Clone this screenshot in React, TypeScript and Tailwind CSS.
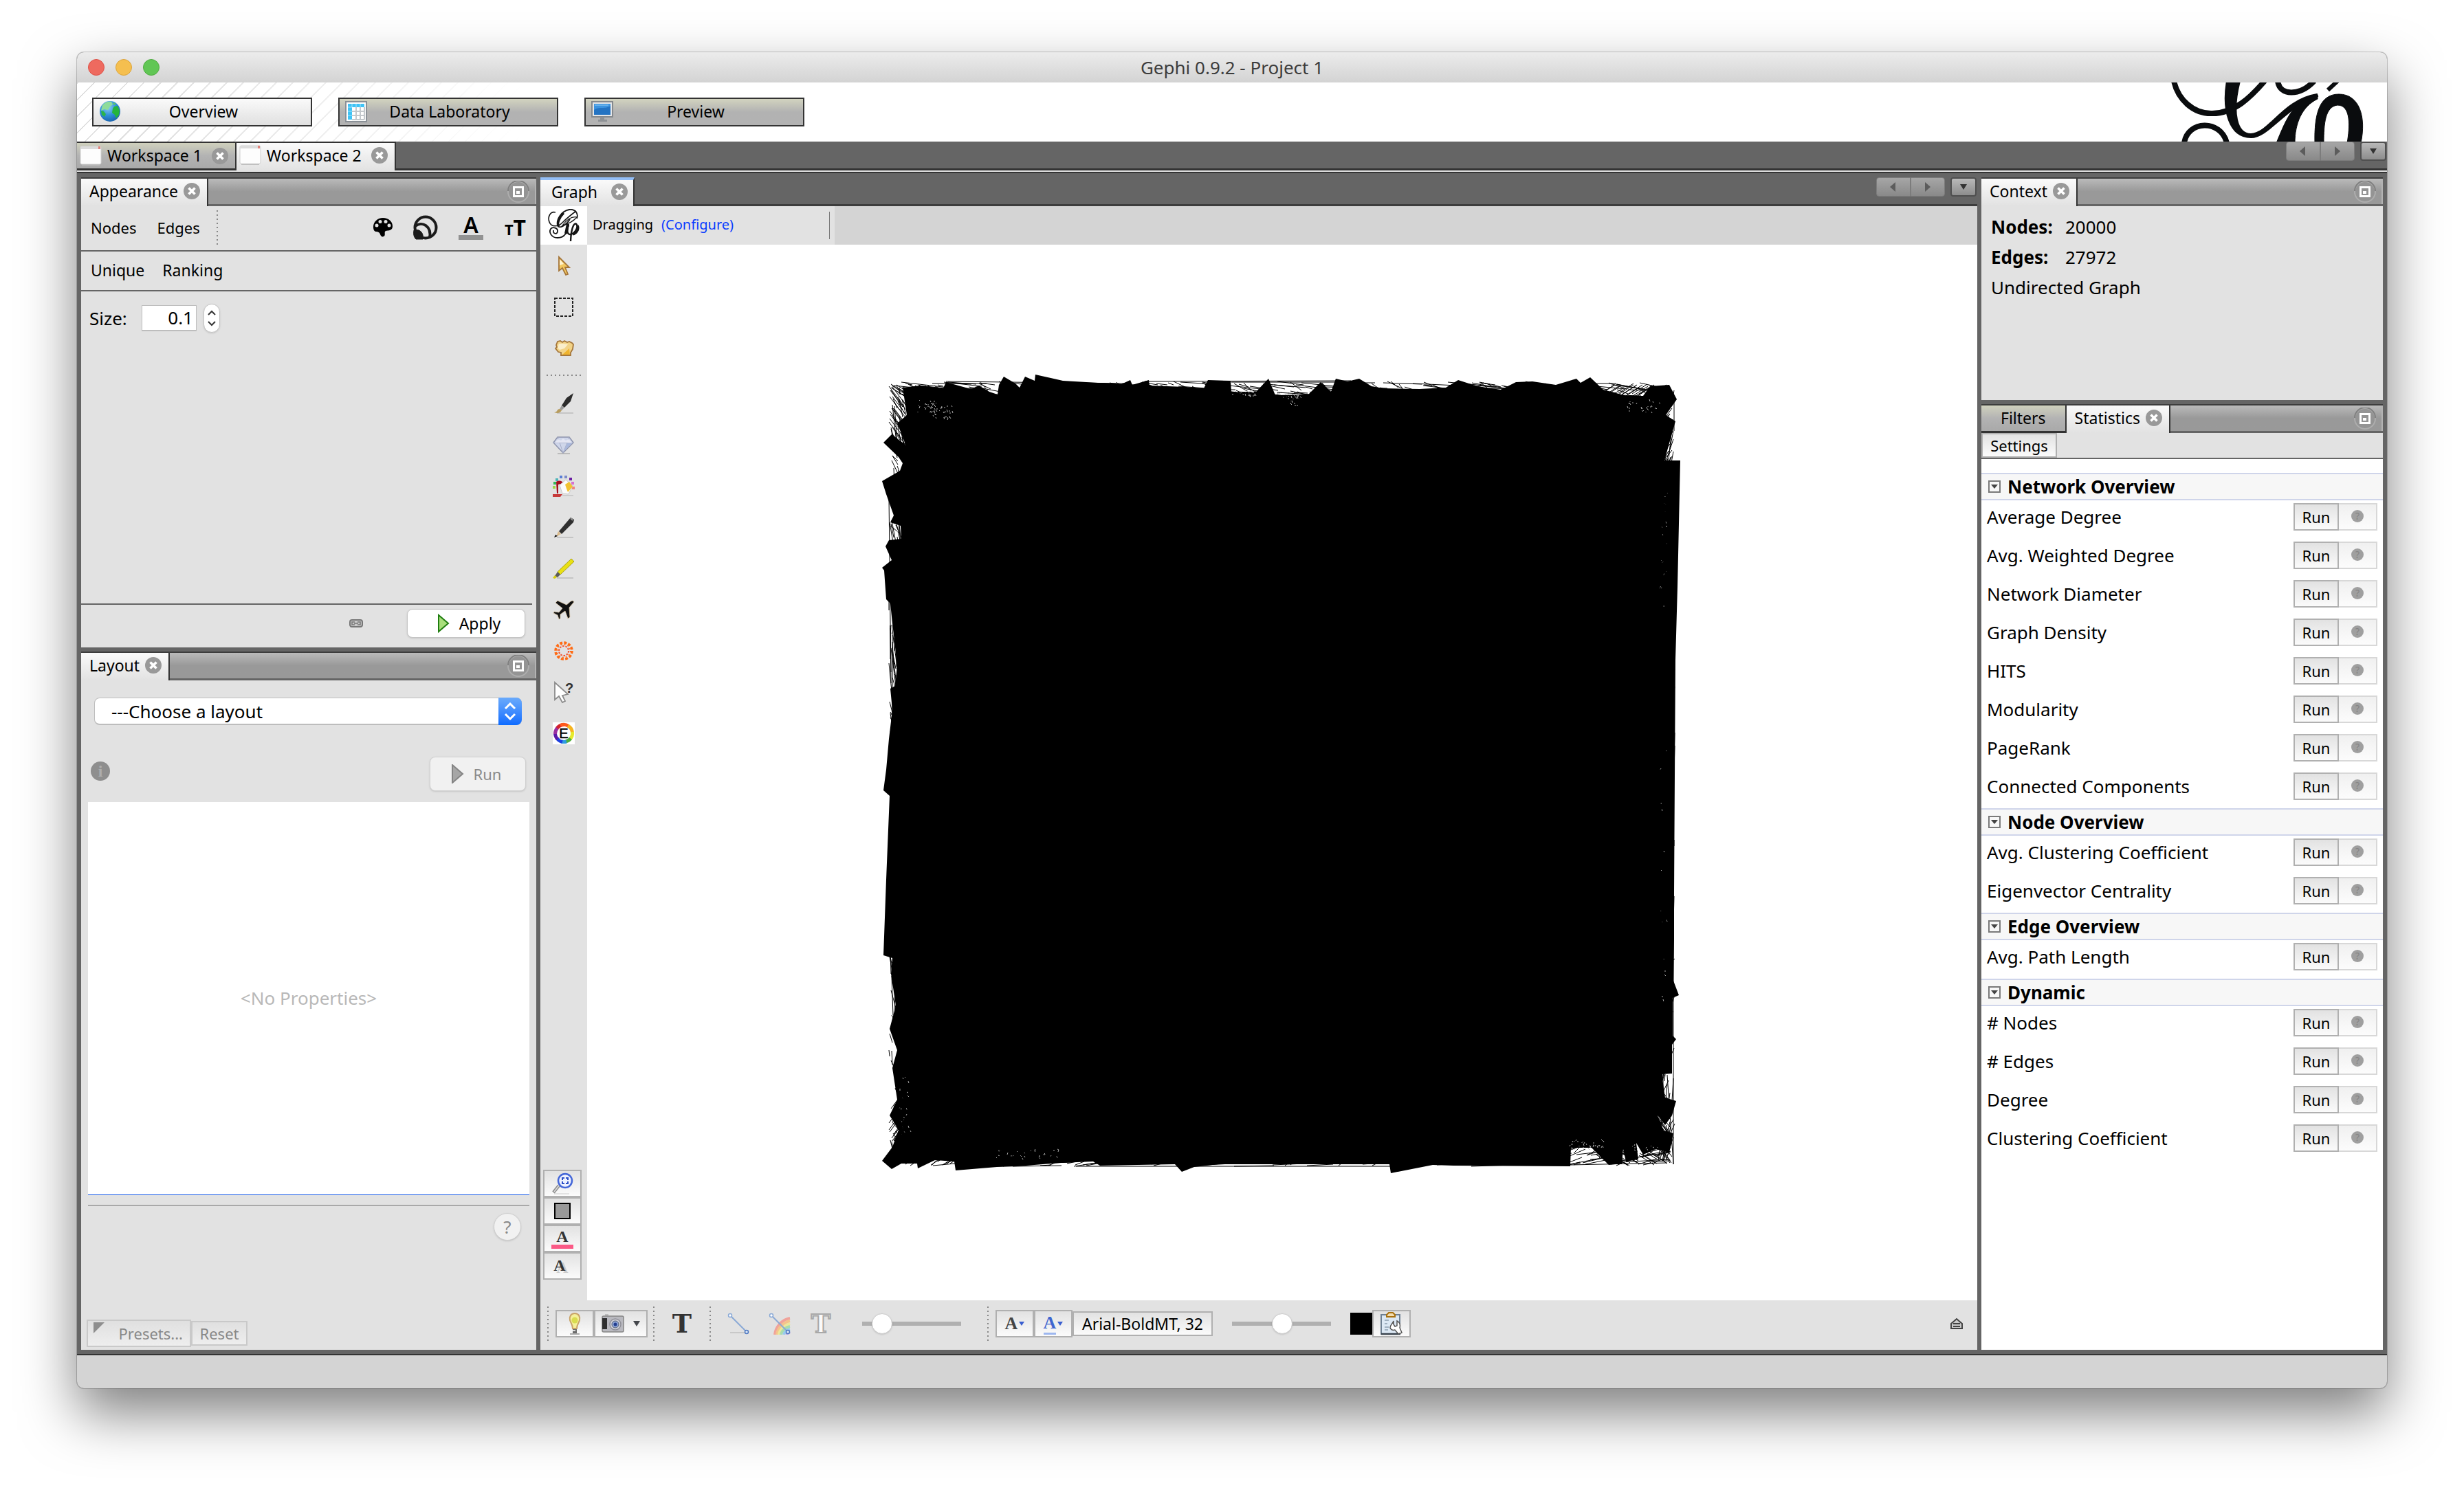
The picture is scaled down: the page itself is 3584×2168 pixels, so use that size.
import type { ReactNode } from 'react';

const perspectives = [
  { title: 'Overview', active: true, icon: <GlobeIcon /> },
  { title: 'Data Laboratory', active: false, icon: <TableIcon /> },
  { title: 'Preview', active: false, icon: <MonitorIcon /> },
];

const statistics = [
  {
    title: 'Network Overview',
    items: [
      'Average Degree',
      'Avg. Weighted Degree',
      'Network Diameter',
      'Graph Density',
      'HITS',
      'Modularity',
      'PageRank',
      'Connected Components',
    ],
  },
  { title: 'Node Overview', items: ['Avg. Clustering Coefficient', 'Eigenvector Centrality'] },
  { title: 'Edge Overview', items: ['Avg. Path Length'] },
  { title: 'Dynamic', items: ['# Nodes', '# Edges', 'Degree', 'Clustering Coefficient'] },
];

/* ---------- icons ---------- */

function GlobeIcon() {
  return (
    <svg viewBox="0 0 32 32" className="size-8">
      <defs>
        <radialGradient id="globe" cx="0.4" cy="0.3" r="0.8">
          <stop offset="0" stopColor="#8fd0f5" />
          <stop offset="0.5" stopColor="#2f8fd8" />
          <stop offset="1" stopColor="#1659a4" />
        </radialGradient>
      </defs>
      <circle cx="16" cy="16" r="15" fill="url(#globe)" />
      <path d="M5 7c4-5 9-6 13-5l2 4-4 3-3 5-5-1-5 2z" fill="#8fdc9a" />
      <path d="M22 9l5-1 3 7-1 6-4 5-2-5-4-3 1-6z" fill="#25b53c" />
      <path d="M3 15l4 1 3 4-2 4-4-3z" fill="#2bb54a" />
      <path d="M20 3l5 2-3 2z" fill="#5cca63" />
    </svg>
  );
}

function TableIcon() {
  return (
    <svg viewBox="0 0 32 32" className="size-8">
      <rect x="1" y="2" width="30" height="29" fill="#fff" stroke="#8a9096" strokeWidth="2" />
      <path d="M4 5h24v5H10v18H4z" fill="#3fc3f5" />
      <path d="M10 5v5M16 5v5M22 5v5M4 10h6M4 16h6M4 22h6" stroke="#a9e4fb" />
      <path d="M10 16h18M10 22h18M10 28h18M16 10v18M22 10v18M28 10v18" stroke="#c3c8cc" strokeWidth="2" />
    </svg>
  );
}

function MonitorIcon() {
  return (
    <svg viewBox="0 0 32 32" className="size-8">
      <rect x="1" y="2" width="30" height="22" fill="#e4e6e8" stroke="#85898d" strokeWidth="2" />
      <rect x="4" y="5" width="24" height="16" fill="#3b93df" />
      <path d="M4 14c8-6 14 0 24-6v13H4z" fill="#2373c2" />
      <path d="M5 6h20v2H5z" fill="#66b0ea" />
      <path d="M13 24h6v4h4v3H10v-3h3z" fill="#8d9195" />
    </svg>
  );
}

function HeaderLogo() {
  return (
    <svg viewBox="3140 120 332 86" className="h-[86px] w-[332px]" fill="none" stroke="#0a0c0e">
      <path d="M3162 118C3168 145 3190 165 3216 165C3250 166 3275 140 3294 118" strokeWidth="8" />
      <path d="M3239 118C3232 160 3242 200 3274 200C3300 200 3325 155 3371 140L3370 137C3320 145 3300 195 3274 195C3254 195 3246 165 3258 118Z" fill="#0a0c0e" strokeWidth="2" />
      <path d="M3371 138C3335 145 3325 175 3311 208H3338C3338 180 3348 155 3371 144Z" fill="#0a0c0e" strokeWidth="1" />
      <path d="M3313 118C3316 140 3345 140 3366 118" strokeWidth="8" />
      <path d="M3400 118L3386 131" strokeWidth="6" />
      <path d="M3367 208C3366 165 3374 137 3402 137C3432 137 3442 170 3434 208H3414C3418 185 3420 153 3400 153C3382 155 3380 180 3380 208Z" fill="#0a0c0e" strokeWidth="1" />
      <path d="M3177 208C3182 175 3230 173 3239 208" strokeWidth="8" />
    </svg>
  );
}

function SmallLogo() {
  return (
    <svg viewBox="0 0 48 48" className="size-12" fill="none" stroke="#151515">
      <path d="M12 5C5 3 0 11 3 19C6 27 16 26 22 20C30 12 38 6 42 3" strokeWidth="1.6" />
      <path d="M43 14C46 6 40 0 32 1C20 3 13 16 15 24C17 30 27 24 33 15" strokeWidth="1.8" />
      <path d="M24 6C17 13 14 22 17 26" strokeWidth="3" />
      <path d="M44 12C36 10 28 16 22 24C30 22 38 18 43 12" strokeWidth="1.2" />
      <path d="M31 22C29 34 26 42 15 42C6 42 2 34 5 29C8 25 16 28 15 33C14 38 8 36 9 31" strokeWidth="1.8" />
      <path d="M31 23C28 30 29 37 33 37C39 37 45 28 43 23C41 19 35 22 34 47" strokeWidth="2.4" />
      <path d="M30 22L27 36" strokeWidth="4" />
      <path d="M44 24C47 30 42 36 37 37" strokeWidth="3.2" />
    </svg>
  );
}

function CloseButton({ label }: { label: string }) {
  return (
    <button type="button" aria-label={label} className="shrink-0">
      <svg viewBox="0 0 24 24" className="size-6">
        <circle cx="12" cy="12" r="12" fill="#999" />
        <path d="M7.5 7.5l9 9M16.5 7.5l-9 9" stroke="#fff" strokeWidth="3.6" />
      </svg>
    </button>
  );
}

function MinimizeButton() {
  return (
    <button type="button" aria-label="Minimize Window Group">
      <svg viewBox="0 0 32 32" className="size-8">
        <circle cx="16" cy="16" r="15" fill="#949494" stroke="#adadad" strokeWidth="2" />
        <path d="M1 15a15 15 0 0 1 30 0" fill="none" stroke="#7f7f7f" strokeWidth="2" />
        <path d="M9.5 9.5h13v13h-13z" fill="none" stroke="#fff" strokeWidth="3" />
        <path d="M13 15h5v4h-5z" fill="#fff" />
      </svg>
    </button>
  );
}

function NavButtons() {
  return (
    <div className="flex gap-2 pr-px">
      <div className="flex">
        <button type="button" aria-label="Scroll left" className="flex h-7 w-[50px] items-center justify-center rounded-l-sm border border-[#7c7c7c] bg-linear-to-b from-[#a6a6a6] to-[#898989]">
          <svg viewBox="0 0 10 14" className="h-3.5 w-2.5" fill="#5c5c5c"><path d="M8 0v14L0 7z" /></svg>
        </button>
        <button type="button" aria-label="Scroll right" className="flex h-7 w-[50px] items-center justify-center rounded-r-sm border border-[#7c7c7c] bg-linear-to-b from-[#a6a6a6] to-[#898989]">
          <svg viewBox="0 0 10 14" className="h-3.5 w-2.5" fill="#5c5c5c"><path d="M1 0v14l8-7z" /></svg>
        </button>
      </div>
      <button type="button" aria-label="Show opened windows" className="flex h-7 w-[38px] items-center justify-center rounded-sm border-2 border-[#4f4f4f] bg-linear-to-b from-[#b9b9b9] to-[#8d8d8d]">
        <svg viewBox="0 0 10 8" className="h-2 w-2.5" fill="#333"><path d="M0 0h10L5 8z" /></svg>
      </button>
    </div>
  );
}

function WorkspaceIcon() {
  return (
    <svg viewBox="0 0 32 30" className="h-[30px] w-8">
      <rect x="1" y="1" width="30" height="26" rx="2" fill="#fdfdfd" stroke="#cfcfcf" />
      <path d="M1 1h30v4H1z" fill="#dcdcdc" />
      <path d="M27 1h3v4h-3z" fill="#e2837b" />
      <path d="M3 28h26v1H3z" fill="#bbb" />
    </svg>
  );
}

function PaletteIcon() {
  return (
    <svg viewBox="0 0 28 28" className="size-7">
      <path d="M14 0C6 0 0 6 0 13c0 5 2 7 4 7 3 0 5 1 6 4s3 4 5 3c3-1 1-5 2-7s4-1 7-2c3-1 4-3 4-6C28 5 22 0 14 0z" fill="#000" />
      <g fill="#e2e2e2">
        <circle cx="5" cy="11" r="2.5" />
        <circle cx="10" cy="5.5" r="2.5" />
        <circle cx="18" cy="5.5" r="2.5" />
        <circle cx="23" cy="11" r="2.5" />
      </g>
    </svg>
  );
}

function SizeIcon() {
  return (
    <svg viewBox="0 0 36 36" className="size-9" fill="none" stroke="#1b1b1b">
      <circle cx="18" cy="18" r="15.5" strokeWidth="4" />
      <path d="M3 16c10-8 24 0 21 17" strokeWidth="4" />
      <path d="M1 22c8-3 15 4 13 13H4c-3-3-4-7-3-13z" fill="#1b1b1b" strokeWidth="1" />
    </svg>
  );
}

function Bold({ size, children }: { size: 'sm' | 'md'; children: ReactNode }) {
  return (
    <span className={size === 'sm' ? "font-['Liberation_Serif',serif] text-[24px] leading-6 font-bold text-[#333]" : "font-['Liberation_Serif',serif] text-[26px] leading-7 font-bold"}>
      {children}
    </span>
  );
}

const toolIcon = 'size-8';

const selectionTools = [
  {
    label: 'Direct selection',
    icon: (
      <svg viewBox="0 0 32 32" className={toolIcon}>
        <path d="M9 3v20l5-4 5 10 3-1-4-10h6z" fill="#f3c860" stroke="#a5763a" strokeWidth="1.8" />
        <path d="M10 6v9l6-2z" fill="#fff3d0" />
      </svg>
    ),
  },
  {
    label: 'Rectangle selection',
    icon: (
      <svg viewBox="0 0 32 32" className={toolIcon}>
        <path d="M3 3h26v26H3z" fill="none" stroke="#222" strokeWidth="2" strokeDasharray="4 2" />
      </svg>
    ),
  },
  {
    label: 'Drag',
    icon: (
      <svg viewBox="0 0 32 32" className={toolIcon}>
        <path d="M5 11l2-5 4-1 3 2 3-2 4 2 3-1 4 2 2 2-1 7-3 5v4H12v-4l-4-1-4-5 2-2z" fill="#f2d387" stroke="#a5763a" strokeWidth="1.8" />
        <path d="M9 9l6 0 7 1-5 6-7 2-3-3z" fill="#faeecb" />
        <path d="M14 25l10-9 1 9z" fill="#efb32d" />
      </svg>
    ),
  },
];

const editTools = [
  {
    label: 'Painter',
    icon: (
      <svg viewBox="0 0 32 32" className={toolIcon}>
        <path d="M6 30h24" stroke="#bbb" strokeWidth="1.5" />
        <path d="M30 1l-4 12-9 9-4-3 7-11z" fill="#2c2c2c" />
        <path d="M13 19l4 3-4 4-3-2z" fill="#9a9a9a" />
        <path d="M2 29c5 0 4-5 8-5l3 2c-2 4-6 5-11 3z" fill="#b79c5e" />
      </svg>
    ),
  },
  {
    label: 'Sizer',
    icon: (
      <svg viewBox="0 0 32 32" className={toolIcon}>
        <path d="M7 29h18" stroke="#bbb" strokeWidth="2" />
        <path d="M7 5h17l6 8-15 15L1 13z" fill="#cfd6ea" stroke="#8d93ac" strokeWidth="1.5" />
        <path d="M7 5l3 8h11l3-8M1 13h29M10 13l5 15 6-15" fill="none" stroke="#a7aec8" />
        <path d="M3 13l5-5 4 2 3-3 4 3 4-2 5 5z" fill="#e4e6f3" />
        <path d="M21 14l7 0-12 12z" fill="#a9b8dc" />
      </svg>
    ),
  },
  {
    label: 'Brush',
    icon: (
      <svg viewBox="0 0 32 32" className={toolIcon}>
        <path d="M0 16h4v4H0z" fill="#9bd84a" />
        <path d="M1 10h4v4H1z" fill="#35b85a" />
        <path d="M4 5h4v4H4z" fill="#4fb5b8" />
        <path d="M10 1h4v4h-4z" fill="#5a7fd6" />
        <path d="M17 1h4v4h-4z" fill="#7c8bc9" />
        <path d="M24 4h4v4h-4z" fill="#6b1ea3" />
        <path d="M27 10h4v4h-4z" fill="#d86fcf" />
        <path d="M28 17h4v4h-4z" fill="#f2837b" />
        <path d="M5 10c5-3 9-1 10 2l-7 2v13H6z" fill="#a60f1e" />
        <path d="M0 28h14l-3 4H0z" fill="#c73a3a" />
        <path d="M10 15l9-8 10 9-6 12-9-1z" fill="#fbfbfb" stroke="#c9c9c9" />
        <path d="M18 14l6-4 5 7-7 8-2-5z" fill="#f1c232" />
        <path d="M14 30h16" stroke="#b5b5b5" />
      </svg>
    ),
  },
  {
    label: 'Node pencil',
    icon: (
      <svg viewBox="0 0 32 32" className={toolIcon}>
        <path d="M6 31h24" stroke="#bbb" strokeWidth="1.5" />
        <path d="M26 2l5 3-1 4-17 17-4-4z" fill="#2f2f2f" />
        <path d="M8 22l4 4-7 4z" fill="#d9b98a" />
        <path d="M2 31l2-4 3 2z" fill="#111" />
        <path d="M26 3l3 3" stroke="#999" strokeWidth="2" />
      </svg>
    ),
  },
  {
    label: 'Edge pencil',
    icon: (
      <svg viewBox="0 0 32 32" className={toolIcon}>
        <path d="M6 30h24" stroke="#bbb" strokeWidth="1.5" />
        <path d="M27 2l4 4-20 19-4-4z" fill="#e9e014" stroke="#a9a112" />
        <path d="M7 21l4 4-4 4-4-2z" fill="#5b5b5b" />
        <path d="M0 30l3-4 3 3-3 2z" fill="#d6cd10" />
      </svg>
    ),
  },
  {
    label: 'Shortest path',
    icon: (
      <svg viewBox="0 0 32 32" className={toolIcon}>
        <path d="M29 3c-3 0-6 4-9 6L7 3 4 6l10 8-5 6-7-1-1 2 6 3 2 6 2-1 0-6 7-5 4 11 3-2-1-14 6-7c1-1 1-2-1-3z" fill="#111" stroke="#dcc6a4" strokeWidth="0.8" />
      </svg>
    ),
  },
  {
    label: 'Heat map',
    icon: (
      <svg viewBox="0 0 32 32" className={toolIcon} fill="none" stroke="#ff6a13">
        <circle cx="16" cy="16" r="12" strokeWidth="3.5" strokeDasharray="4 2.28" />
        <circle cx="16" cy="16" r="7" strokeWidth="2" stroke="#f4502c" strokeDasharray="2.6 1.8" />
        <circle cx="16" cy="16" r="9.5" strokeWidth="1.5" strokeDasharray="2 3" />
      </svg>
    ),
  },
  {
    label: 'Edit',
    icon: (
      <svg viewBox="0 0 32 32" className="size-8 overflow-visible">
        <path d="M3 2v25l6-5 5 9 4-2-4-8 8-2z" fill="#fff" stroke="#8b8b8b" strokeWidth="1.8" />
        <text x="18" y="17" className="font-['Liberation_Sans',sans-serif] text-[20px] font-bold" fill="#333">?</text>
      </svg>
    ),
  },
];

function EditorIcon() {
  return (
    <svg viewBox="0 0 32 32" className={toolIcon} fill="none" strokeWidth="5">
      <path d="M0 0h32v32H0z" fill="#fff" />
      <path d="M6 9A12.5 12.5 0 0 1 16 3.5" stroke="#d2222e" />
      <path d="M11 4.5A12.5 12.5 0 0 1 23 5.5" stroke="#ff5a1c" />
      <path d="M22 5A12.5 12.5 0 0 1 28.5 15" stroke="#f6b420" />
      <path d="M28.5 14A12.5 12.5 0 0 1 25 24.5" stroke="#e6ea2c" />
      <path d="M26 23.5A12.5 12.5 0 0 1 19 28" stroke="#4faf3c" />
      <path d="M20 28A12.5 12.5 0 0 1 13 28" stroke="#2f9be0" />
      <path d="M14 28.5A12.5 12.5 0 0 1 6 23" stroke="#1d3fe0" />
      <path d="M7 24.5A12.5 12.5 0 0 1 3.5 15" stroke="#5a18a8" />
      <path d="M3.5 17A12.5 12.5 0 0 1 6.5 8.5" stroke="#9a2fa0" />
      <text x="16" y="23" textAnchor="middle" className="font-['Liberation_Sans',sans-serif] text-[20px]" fill="#000" stroke="#000" strokeWidth="0.5">E</text>
    </svg>
  );
}

function MagnifierIcon() {
  return (
    <svg viewBox="0 0 32 32" className="size-8" fill="none">
      <path d="M4 31h22" stroke="#ccc" />
      <path d="M3 29l8-10" stroke="#8e8e8e" strokeWidth="4.5" />
      <path d="M4 28l7-9" stroke="#ddd" strokeWidth="1.5" />
      <circle cx="20" cy="12" r="10" stroke="#4467d8" strokeWidth="2.5" fill="#eef2ff" />
      <path d="M16 11V8h3M21 8h3v3M24 13v3h-3M19 16h-3v-3" stroke="#2b4fc7" strokeWidth="2" />
    </svg>
  );
}

function BulbIcon() {
  return (
    <svg viewBox="0 0 32 32" className="size-8">
      <path d="M9 31h14" stroke="#aaa" strokeWidth="2" />
      <path d="M16 1c-6 0-8 5-7 10 1 4 4 6 4 12h6c0-6 3-8 4-12 1-5-1-10-7-10z" fill="#f4f09a" stroke="#c9a368" strokeWidth="2" />
      <circle cx="16" cy="11" r="4.5" fill="#d9dc4f" />
      <path d="M13 24h6v6h-6z" fill="#6c6c6c" />
      <path d="M13 26h4" stroke="#ddd" strokeWidth="2" />
    </svg>
  );
}

function CameraIcon() {
  return (
    <svg viewBox="0 0 34 30" className="h-[30px] w-[34px]">
      <path d="M5 1h5v4H5z" fill="#bdbdbd" />
      <rect x="1" y="4" width="31" height="23" rx="2" fill="#b9b9bf" stroke="#858585" strokeWidth="1.5" />
      <path d="M1 7h7v16H1z" fill="#2f2f2f" />
      <circle cx="20" cy="16" r="8" fill="#cfcfd8" stroke="#8f8f98" strokeWidth="1.5" />
      <circle cx="20" cy="16" r="5" fill="#8ea4d8" stroke="#55606f" />
      <circle cx="20" cy="16" r="2.5" fill="#223d8e" />
    </svg>
  );
}

function EdgeIcon({ rainbow = false }: { rainbow?: boolean }) {
  return (
    <svg viewBox="0 0 32 32" className="size-8" fill="none">
      {rainbow ? (
        <g strokeWidth="4">
          <path d="M9 32C10 20 20 10 31 8" stroke="#f0a39b" />
          <path d="M12 32C13 22 22 14 31 12" stroke="#f4c38c" />
          <path d="M15 32C16 24 24 18 31 16" stroke="#ece79a" />
          <path d="M18 32C19 26 25 21 31 20" stroke="#a9dcae" />
          <path d="M22 32C23 28 27 25 31 24" stroke="#97cbee" />
          <path d="M26 32C27 30 29 29 31 28" stroke="#b6a5e3" />
        </g>
      ) : (
        <path d="M4 29h22" stroke="#c8c8c8" strokeWidth="2" />
      )}
      <path d="M4 4l24 24" stroke="#8aa9d6" strokeWidth="2" />
      <circle cx="4" cy="4" r="2.5" fill="#fff" stroke="#8aa9d6" strokeWidth="1.5" />
      <circle cx="28" cy="28" r="2.5" fill="#dce8f8" stroke="#4f78c0" strokeWidth="1.5" />
    </svg>
  );
}

function ClipboardIcon() {
  return (
    <svg viewBox="0 0 34 34" className="size-[34px]">
      <rect x="2" y="4" width="27" height="28" fill="#dce8f4" stroke="#6e8093" strokeWidth="2" />
      <path d="M2 32h28" stroke="#39434d" strokeWidth="2.5" />
      <path d="M10 7V4l3-3h6l3 3v3z" fill="#f3ddb0" stroke="#a8710f" strokeWidth="2" />
      <path d="M7 12h6M7 17h4M7 22h6M7 26h5" stroke="#8b9dae" strokeWidth="1.5" />
      <path d="M20 13c-2 5-5 6-5 10 1 3 4 4 7 3l5 6 5-2-3-7c1-4 0-8-4-10l0 7-3 1-2-3z" fill="#fff" stroke="#555" strokeWidth="1.5" />
    </svg>
  );
}

function ChainIcon() {
  return (
    <svg viewBox="0 0 20 12" className="h-3 w-5" fill="none" stroke="#777">
      <rect x="1" y="1" width="18" height="10" rx="3" fill="#c9c9c9" strokeWidth="2" />
      <path d="M8 4H4v4h4M12 4h4v4h-4M7 6h6" strokeWidth="1.5" />
    </svg>
  );
}

/* ---------- shared pieces ---------- */

function Tab({ title, inactive = false, focused = false }: { title: string; inactive?: boolean; focused?: boolean }) {
  if (inactive) {
    return (
      <div className="flex h-full items-center border-r-2 border-b-3 border-[#333] bg-linear-to-b from-[#d0d1bd] via-[#b3b3b3] to-[#a9a9a9] px-7">
        <button type="button" role="tab" aria-selected={false}>{title}</button>
      </div>
    );
  }
  return (
    <div className={focused
      ? 'flex h-full items-center gap-5 border-t-4 border-r-2 border-t-[#93bdf5] border-r-[#333] bg-linear-to-b from-[#fafafa] to-[#e2e2e2] pr-2 pb-1 pl-4'
      : 'flex h-full items-center gap-2 border-r-2 border-[#333] bg-linear-to-b from-[#fafafa] to-[#e2e2e2] pr-2.5 pb-1 pl-3'}
    >
      <button type="button" role="tab" aria-selected>{title}</button>
      <CloseButton label={`Close ${title}`} />
    </div>
  );
}

function PanelBar({ children }: { children: ReactNode }) {
  return (
    <div className="flex h-[42px] shrink-0 border-t-2 border-[#3d3d3d] bg-[#656565] text-[23px]">
      <div role="tablist" className="flex">{children}</div>
      <div className="mb-[3px] flex flex-1 items-center justify-end border-r-2 border-[#b3b3b3] bg-linear-to-b from-[#bababa] to-[#999] to-50% pr-2">
        <MinimizeButton />
      </div>
    </div>
  );
}

const boxButton = 'flex shrink-0 items-center justify-center border-2 border-[#b0b0b0] bg-linear-to-b from-[#e2e2e2] to-[#fbfbfb]';

function Dots() {
  return <div className="h-[50px] w-0.5 shrink-0 bg-[repeating-linear-gradient(180deg,#888_0_2px,transparent_2px_6px)]" />;
}

/* ---------- left column ---------- */

function AppearancePanel() {
  return (
    <section className="flex h-[684px] flex-col bg-[#e2e2e2]">
      <PanelBar><Tab title="Appearance" /></PanelBar>
      <div className="flex h-[66px] shrink-0 items-center border-b-2 border-[#656565] px-[14px] pb-0.5 text-[22px]">
        <button type="button" className="mr-[30px]">Nodes</button>
        <button type="button" className="mr-6">Edges</button>
        <Dots />
        <div className="ml-auto flex items-center gap-[30px]">
          <button type="button" aria-label="Color"><PaletteIcon /></button>
          <button type="button" aria-label="Size"><SizeIcon /></button>
          <button type="button" aria-label="Label color" className="flex h-9 w-9 items-start justify-center border-b-[7px] border-[#929292] text-[32px] leading-7 font-semibold">A</button>
          <button type="button" aria-label="Label size" className="flex w-[33px] items-end justify-center leading-8 font-bold">
            <span className="text-[22px] leading-7">T</span>
            <span className="text-[32px] leading-8">T</span>
          </button>
        </div>
      </div>
      <div className="flex h-[58px] shrink-0 items-center gap-[26px] border-b-2 border-[#656565] px-[14px] pb-0.5 text-[23px]">
        <button type="button">Unique</button>
        <button type="button">Ranking</button>
      </div>
      <div className="flex items-center px-3 pt-[18px] text-[26px]">
        <label htmlFor="size" className="w-[76px]">Size:</label>
        <input id="size" defaultValue="0.1" className="h-[38px] w-20 border border-b-2 border-[#bdbdbd] bg-white pr-1 text-right" />
        <div className="ml-2.5 flex h-[42px] w-6 flex-col items-center justify-center gap-2 rounded-xl border border-[#c4c4c4] bg-white shadow-sm">
          <button type="button" aria-label="Increase">
            <svg viewBox="0 0 12 8" className="h-2 w-3" fill="none" stroke="#333" strokeWidth="2"><path d="M1 7l5-5 5 5" /></svg>
          </button>
          <button type="button" aria-label="Decrease">
            <svg viewBox="0 0 12 8" className="h-2 w-3" fill="none" stroke="#333" strokeWidth="2"><path d="M1 1l5 5 5-5" /></svg>
          </button>
        </div>
      </div>
      <div className="mt-auto mr-1.5 flex h-16 shrink-0 items-center justify-end gap-16 border-t-2 border-[#656565] pr-2.5 pb-2">
        <button type="button" aria-label="Auto apply"><ChainIcon /></button>
        <button type="button" className="flex h-[42px] w-[172px] items-center justify-center gap-3.5 rounded-lg border border-[#c4c4c4] bg-white pl-2 text-[23px] shadow-sm">
          <svg viewBox="0 0 18 28" className="h-7 w-[18px]"><path d="M2 2v24l14-12z" fill="#a9df7c" stroke="#1f7d10" strokeWidth="2" /></svg>
          Apply
        </button>
      </div>
    </section>
  );
}

function LayoutPanel() {
  return (
    <section className="flex min-h-0 flex-1 flex-col bg-[#e2e2e2]">
      <PanelBar><Tab title="Layout" /></PanelBar>
      <div className="relative mt-[25px] mr-[21px] ml-[19px] flex h-10 shrink-0 rounded-lg border border-b-2 border-[#bdbdbd] bg-white">
        <select aria-label="Layout" className="w-full appearance-none bg-transparent pl-6 text-[26px] outline-none">
          <option>---Choose a layout</option>
        </select>
        <div className="pointer-events-none absolute -top-px -right-px flex h-10 w-[34px] items-center justify-center rounded-r-lg bg-linear-to-b from-[#6aaafb] to-[#0b6bff]">
          <svg viewBox="0 0 18 26" className="h-[26px] w-[18px]" fill="none" stroke="#fff" strokeWidth="3"><path d="M2 9l7-7 7 7M2 17l7 7 7-7" /></svg>
        </div>
      </div>
      <div className="mt-[46px] mr-[15px] ml-[14px] flex h-[50px] shrink-0 items-center justify-between">
        <button type="button" aria-label="Layout info" className="mb-2 flex size-7 items-center justify-center rounded-full bg-[#8e8e8e] font-['Liberation_Serif',serif] text-[24px] leading-7 font-bold text-[#adadad]">i</button>
        <button type="button" disabled className="flex h-[50px] w-[140px] items-center justify-center gap-3.5 rounded-lg border border-[#d0d0d0] bg-[#f1f1f1] pr-1 text-[22px] text-[#8a8a8a] shadow-sm">
          <svg viewBox="0 0 18 28" className="h-7 w-[18px]"><path d="M1 1v26l15-13z" fill="#a6a6a6" stroke="#848484" strokeWidth="2" /></svg>
          Run
        </button>
      </div>
      <div className="mx-2.5 mt-4 flex flex-1 items-center justify-center bg-white text-[26px] text-[#b8b8b8]">
        &lt;No Properties&gt;
      </div>
      <div className="mx-2.5 h-px shrink-0 bg-[#0a50e6]" />
      <div className="mx-2.5 mt-3.5 h-0.5 shrink-0 bg-[#a9a9a9]" />
      <div className="flex h-[165px] shrink-0 justify-end pt-2.5 pr-[22px]">
        <button type="button" aria-label="Help" className="flex size-10 items-center justify-center rounded-full border border-[#cfcfcf] bg-[#f1f1f1] text-[26px] text-[#888] shadow-sm">?</button>
      </div>
      <div className="flex h-11 shrink-0 items-start pl-2 text-[22px] text-[#888]">
        <button type="button" disabled className="flex h-10 w-[152px] items-center justify-end border-2 border-[#c9c9c9] bg-linear-to-b from-[#e0e0e0] to-[#eee] pr-2.5">
          <svg viewBox="0 0 16 16" className="mr-auto mb-4 ml-2 size-4" fill="#8e8e8e"><path d="M0 0h16L0 16z" /></svg>
          Presets...
        </button>
        <button type="button" disabled className="mt-0.5 h-9 w-[82px] border-2 border-[#c9c9c9] bg-linear-to-b from-[#e0e0e0] to-[#eee] leading-8">Reset</button>
      </div>
    </section>
  );
}

/* ---------- graph ---------- */

// outline of the solid mass of edges, clockwise from the top left corner
const mass =
  '48,40 73,37 107,41 111,32 147,42 159,37 174,46 186,50 188,36 195,24 212,34 218,40 226,24 240,30 241,21 281,30 366,35 379,29 382,36 406,29 407,37 459,39 486,41 492,29 525,30 526,46 562,46 580,27 590,51 638,50 656,32 671,46 678,27 695,31 712,27 730,38 747,41 800,42 838,40 856,29 884,38 918,43 940,32 964,31 998,36 1028,27 1034,33 1048,25 1067,43 1101,52 1125,52 1135,38 1163,36 1174,57 1158,80 1172,89 1158,139 1156,146 1179,146 1175,330 1172,436 1170,776 1170,843 1169,903 1177,924 1168,928 1168,983 1173,988 1167,996 1167,1038 1152,1039 1157,1073 1173,1078 1167,1099 1157,1113 1146,1099 1155,1121 1169,1125 1163,1153 1144,1148 1125,1156 1115,1139 1118,1163 1100,1166 1096,1148 1094,1169 1075,1171 1050,1146 1020,1146 1019,1173 849,1172 819,1171 758,1183 756,1170 635,1170 507,1170 472,1174 454,1181 444,1170 335,1172 325,1166 278,1168 215,1173 185,1174 125,1179 123,1166 95,1164 70,1176 69,1169 46,1169 32,1177 18,1165 33,1145 42,1120 29,1099 40,1076 33,1030 40,1004 29,973 38,939 31,893 33,870 20,866 24,756 29,634 20,626 24,596 28,551 33,509 30,478 37,474 40,444 33,383 30,354 24,348 21,306 18,302 32,291 23,271 28,262 46,260 45,241 30,236 35,226 24,195 18,176 44,161 48,150 42,141 20,120 32,108 53,124 40,92 54,80';

function createRandom(seed: number) {
  let s = seed;
  return () => {
    s = (s * 16807) % 2147483647;
    return s / 2147483647;
  };
}

function buildEdges() {
  const rand = createRandom(42);
  let d = '';
  for (let i = 0; i < 1100; i++) {
    const side = i % 4;
    const at = 35 + rand() * 1110;
    const len = 8 + rand() * rand() * 80;
    const near = 28 + rand() * 22;
    const far = near + rand() * 12;
    const a = Math.round(at);
    const b = Math.round(Math.min(at + len, 1165));
    const n = Math.round(near);
    const f = Math.round(far);
    if (side === 0) d += `M${a} ${n + 3}L${b} ${f + 3}`;
    if (side === 1) d += `M${1199 - n} ${a}L${1199 - f} ${b}`;
    if (side === 2) d += `M${a} ${1201 - n}L${b} ${1201 - f}`;
    if (side === 3) d += `M${n} ${a}L${f} ${b}`;
  }
  // loose fans in the corners
  const corners = [[28, 34, 1, 1], [1168, 34, -1, 1], [1168, 1172, -1, -1], [28, 1172, 1, -1]];
  corners.forEach(([x, y, sx, sy]) => {
    for (let i = 0; i < 40; i++) {
      const x1 = Math.round(x + sx * rand() * 90);
      const y1 = Math.round(y + sy * rand() * 8);
      const x2 = Math.round(x + sx * rand() * 8);
      const y2 = Math.round(y + sy * rand() * 90);
      d += i % 2 ? `M${x1} ${y1}l${sx * 22} ${sy * 14}` : `M${x2} ${y2}l${sx * 18} ${sy * 24}`;
    }
  });
  // long hulls along the outer nodes
  d += 'M111 31L380 34M400 31L700 30M526 32H690M28 200L31 470M33 400V620M1169 520V1170M1160 1040L1169 1170M300 1173H760M1019 1171L1160 1168';
  return d;
}

function buildSpecks() {
  const rand = createRandom(7);
  let d = '';
  // x, y, width, height, count
  const areas = [
    [70, 58, 26, 18, 30],
    [90, 66, 30, 18, 30],
    [526, 44, 36, 8, 30],
    [592, 46, 36, 8, 30],
    [606, 54, 18, 14, 10],
    [1100, 56, 50, 20, 24],
    [1150, 180, 10, 180, 16],
    [1150, 560, 10, 380, 14],
    [1018, 1134, 50, 14, 30],
    [1110, 1140, 40, 14, 14],
    [180, 1148, 100, 14, 24],
    [44, 1040, 16, 90, 20],
  ];
  areas.forEach(([x, y, w, h, count]) => {
    for (let i = 0; i < count; i++) {
      d += `M${Math.round(x + rand() * w)} ${Math.round(y + rand() * h)}l${Math.round(rand() * 3 - 1)} ${Math.round(1 + rand() * 2)}`;
    }
  });
  return d;
}

function GraphCanvas() {
  return (
    <div className="flex flex-1 items-center justify-center bg-white">
      <svg viewBox="0 0 1200 1200" className="size-[1200px]" role="img" aria-label="Graph">
        <polygon points={mass} fill="#000" />
        <path d={buildSpecks()} stroke="#aaa" strokeWidth="1" fill="none" />
        <path d={buildEdges()} stroke="#000" strokeWidth="1" fill="none" />
      </svg>
    </div>
  );
}

function SideTools() {
  return (
    <div className="flex w-[68px] shrink-0 flex-col items-center bg-[#e2e2e2] pb-[30px]">
      <div className="flex flex-col gap-7 pt-[15px]">
        {selectionTools.map((tool) => (
          <button key={tool.label} type="button" aria-label={tool.label}>{tool.icon}</button>
        ))}
      </div>
      <div className="mt-[22px] h-0.5 w-[50px] bg-[repeating-linear-gradient(90deg,#888_0_2px,transparent_2px_6px)]" />
      <div className="mt-6 flex flex-col gap-7">
        {editTools.map((tool) => (
          <button key={tool.label} type="button" aria-label={tool.label}>{tool.icon}</button>
        ))}
        <button type="button" aria-label="Editor"><EditorIcon /></button>
      </div>
      <div className="mt-auto mr-1 flex flex-col">
        <button type="button" aria-label="Center on graph" className={`${boxButton} h-10 w-14`}><MagnifierIcon /></button>
        <button type="button" aria-label="Reset colors" className={`${boxButton} h-10 w-14`}>
          <span className="size-6 border-2 border-black bg-[#999]" />
        </button>
        <button type="button" aria-label="Reset label colors" className={`${boxButton} h-10 w-14`}>
          <span className="flex h-[30px] w-8 items-center justify-center border-b-[6px] border-[#fb5a86]"><Bold size="sm">A</Bold></span>
        </button>
        <button type="button" aria-label="Reset label visible" className={`${boxButton} h-10 w-14 pr-2`}>
          <span className="[text-shadow:4px_3px_#ccc]"><Bold size="sm">A</Bold></span>
        </button>
      </div>
    </div>
  );
}

function Slider({ label, value }: { label: string; value: number }) {
  return (
    <input
      type="range"
      aria-label={label}
      defaultValue={value}
      className="h-8 w-36 shrink-0 appearance-none bg-[linear-gradient(#b0b0b0,#b0b0b0)] bg-size-[100%_6px] bg-center bg-no-repeat [&::-webkit-slider-thumb]:size-[30px] [&::-webkit-slider-thumb]:appearance-none [&::-webkit-slider-thumb]:rounded-full [&::-webkit-slider-thumb]:border [&::-webkit-slider-thumb]:border-[#ccc] [&::-webkit-slider-thumb]:bg-white [&::-webkit-slider-thumb]:shadow-sm"
    />
  );
}

function BottomTools() {
  return (
    <div className="flex h-[72px] shrink-0 items-center bg-[#e2e2e2] pb-1 pl-2.5">
      <Dots />
      <div className="ml-2.5 flex">
        <button type="button" aria-label="Background color" className={`${boxButton} h-10 w-14`}><BulbIcon /></button>
        <button type="button" aria-label="Take screenshot" className={`${boxButton} h-10 w-[78px] gap-3`}>
          <CameraIcon />
          <svg viewBox="0 0 10 8" className="h-2 w-2.5" fill="#44474c"><path d="M0 0h10L5 8z" /></svg>
        </button>
      </div>
      <div className="ml-2"><Dots /></div>
      <button type="button" aria-label="Show node labels" className="mx-6 w-8 font-['DejaVu_Serif',serif] text-[38px] leading-8 font-bold text-[#333]">T</button>
      <Dots />
      <div className="ml-6 flex gap-7">
        <button type="button" aria-label="Show edges"><EdgeIcon /></button>
        <button type="button" aria-label="Edges have source node color"><EdgeIcon rainbow /></button>
        <button type="button" aria-label="Show edge labels" className="w-8 font-['DejaVu_Serif',serif] text-[38px] leading-8 font-bold text-[#fafafa] [-webkit-text-stroke:2px_#a8a8a8]">T</button>
      </div>
      <div className="mr-[38px] ml-11 flex"><Slider label="Edge weight scale" value={12} /></div>
      <Dots />
      <div className="ml-2.5 flex items-center">
        <button type="button" aria-label="Size mode" className={`${boxButton} h-10 w-14 text-[#444]`}>
          <Bold size="md">A</Bold>
          <svg viewBox="0 0 8 6" className="ml-0.5 h-1.5 w-2" fill="#3a5fd0"><path d="M0 0h8L4 6z" /></svg>
        </button>
        <button type="button" aria-label="Color mode" className={`${boxButton} h-10 w-14 text-[#3f66cf]`}>
          <span className="border-b-3 border-[#9db7ef]"><Bold size="md">A</Bold></span>
          <svg viewBox="0 0 8 6" className="ml-0.5 h-1.5 w-2" fill="#3a5fd0"><path d="M0 0h8L4 6z" /></svg>
        </button>
        <button type="button" className={`${boxButton} h-9 w-[204px] text-[23px]`}>Arial-BoldMT, 32</button>
      </div>
      <div className="mx-7 flex"><Slider label="Font size scale" value={51} /></div>
      <button type="button" aria-label="Default color" className="h-8 w-8 bg-black" />
      <button type="button" aria-label="Attributes" className={`${boxButton} h-10 w-14`}><ClipboardIcon /></button>
      <button type="button" aria-label="Expand settings" className="mr-5 ml-auto">
        <svg viewBox="0 0 20 18" className="h-[18px] w-5"><path d="M2 9l8-7 8 7v7H2z" fill="#ccc" stroke="#444" strokeWidth="2" /><path d="M5 9h10M5 13h10" stroke="#444" strokeWidth="2" /></svg>
      </button>
    </div>
  );
}

function GraphPanel() {
  return (
    <section className="flex min-w-0 flex-1 flex-col">
      <div className="flex h-[42px] shrink-0 items-start justify-between border-b-3 border-[#3d3d3d] bg-[#656565] text-[23px]">
        <div role="tablist" className="h-[42px]"><Tab title="Graph" focused /></div>
        <NavButtons />
      </div>
      <div className="flex h-14 shrink-0 items-center bg-[#d4d4d4]">
        <div className="flex h-full w-[68px] items-center justify-center bg-white"><SmallLogo /></div>
        <div className="flex h-full w-[360px] items-center justify-between bg-[#e2e2e2] pr-[7px] pl-2 text-[20px]">
          <p className="flex gap-3 pb-0.5">
            Dragging
            <a href="#configure" className="text-[#0a3cff]">(Configure)</a>
          </p>
          <div className="h-10 w-px bg-[#777]" />
        </div>
      </div>
      <div className="flex flex-1">
        <SideTools />
        <GraphCanvas />
      </div>
      <BottomTools />
    </section>
  );
}

/* ---------- right column ---------- */

function ContextPanel() {
  return (
    <section className="h-[324px] bg-[#e2e2e2]">
      <PanelBar><Tab title="Context" /></PanelBar>
      <dl className="grid grid-cols-[108px_1fr] px-[14px] pt-2 text-[26px] leading-[44px]">
        <dt className="font-bold">Nodes:</dt>
        <dd>20000</dd>
        <dt className="font-bold">Edges:</dt>
        <dd>27972</dd>
      </dl>
      <p className="px-[14px] text-[26px] leading-[44px]">Undirected Graph</p>
    </section>
  );
}

function StatisticsPanel() {
  return (
    <section className="flex flex-1 flex-col bg-white">
      <PanelBar>
        <Tab title="Filters" inactive />
        <Tab title="Statistics" />
      </PanelBar>
      <div className="mb-5 flex h-[38px] shrink-0 border-b-2 border-[#656565] bg-[#e2e2e2]">
        <button type="button" className={`${boxButton} h-9 w-[110px] text-[22px]`}>Settings</button>
      </div>
      {statistics.map((group) => (
        <div key={group.title}>
          <h2 className="flex h-10 items-center gap-2.5 border-y-2 border-[#cfd5ea] bg-[#f7f7f7] pl-2.5 text-[26px] font-bold">
            <button type="button" aria-label={`Collapse ${group.title}`}>
              <svg viewBox="0 0 18 18" className="size-[18px]"><path d="M1 1h16v16H1z" fill="#f7f7f7" stroke="#7a7a7a" strokeWidth="2" /><path d="M4 6h10l-5 6z" fill="#444" /></svg>
            </button>
            {group.title}
          </h2>
          <ul>
            {group.items.map((item) => (
              <li key={item} className="flex h-14 items-start pt-1 pr-2 pl-2">
                <span className="flex-1 text-[26px] leading-10">{item}</span>
                <button type="button" className={`${boxButton} h-10 w-[66px] text-[22px]`}>Run</button>
                <button type="button" disabled aria-label={`${item} report`} className="flex h-10 w-14 items-center justify-center border-2 border-l-0 border-[#d8d8d8] bg-linear-to-b from-[#f0f0f0] to-[#fcfcfc]">
                  <span className="mb-0.5 flex size-[18px] items-center justify-center rounded-full bg-[#9f9f9f] text-[14px] leading-none text-[#858585]">?</span>
                </button>
              </li>
            ))}
          </ul>
        </div>
      ))}
    </section>
  );
}

/* ---------- window ---------- */

export default function App() {
  return (
    <div className="flex min-h-screen flex-col bg-white px-28 pt-[76px] pb-[148px] font-['Noto_Sans',sans-serif] text-black">
      <div className="flex flex-1 flex-col overflow-hidden rounded-[10px] bg-[#656565] shadow-[0_0_0_1px_rgba(0,0,0,0.2),0_36px_80px_rgba(0,0,0,0.5)]">
        <header className="grid h-11 shrink-0 grid-cols-[1fr_auto_1fr] items-center bg-linear-to-b from-[#ececec] to-[#d3d3d3] px-4">
          <div className="flex gap-4">
            <button type="button" aria-label="Close" className="size-6 rounded-full border border-[#dd5147] bg-[#ee6a5f]" />
            <button type="button" aria-label="Minimize" className="size-6 rounded-full border border-[#dba43c] bg-[#f5bf4f]" />
            <button type="button" aria-label="Zoom" className="size-6 rounded-full border border-[#50ab41] bg-[#61c655]" />
          </div>
          <h1 className="text-[26px] text-[#3c3c3c]">Gephi 0.9.2 - Project 1</h1>
        </header>

        <div className="flex h-[86px] shrink-0 items-center justify-between bg-white bg-[linear-gradient(90deg,transparent,white_650px),repeating-linear-gradient(135deg,#dcdcdc_0_2px,white_2px_17px)] pl-[22px]">
          <nav className="flex gap-[38px]">
            {perspectives.map((item) => (
              <button
                key={item.title}
                type="button"
                className={item.active
                  ? 'flex h-[42px] w-80 items-center border-2 border-[#333] bg-linear-to-b from-[#fafafa] to-[#e0e0e0] pr-9 pb-0.5 pl-2 text-[23px]'
                  : 'flex h-[42px] w-80 items-center border-2 border-[#333] bg-linear-to-b from-[#d2d3bf] to-[#b2b2b2] to-50% pr-9 pb-0.5 pl-2 text-[23px]'}
              >
                {item.icon}
                <span className="flex-1">{item.title}</span>
              </button>
            ))}
          </nav>
          <HeaderLogo />
        </div>

        <div className="flex h-[42px] shrink-0 items-start justify-between border-b-3 border-[#333] text-[23px]">
          <div role="tablist" className="flex h-[42px]">
            <div className="flex items-center border-t-2 border-r-2 border-b-3 border-[#333] bg-linear-to-b from-[#d0d1bd] via-[#b3b3b3] to-[#a9a9a9] pr-2.5 pl-1">
              <WorkspaceIcon />
              <button type="button" role="tab" aria-selected={false} className="mr-3.5 ml-2">Workspace 1</button>
              <CloseButton label="Close Workspace 1" />
            </div>
            <div className="flex items-center border-t-2 border-r-2 border-[#333] bg-linear-to-b from-[#fafafa] to-[#e2e2e2] pr-2.5 pb-1 pl-1">
              <WorkspaceIcon />
              <button type="button" role="tab" aria-selected className="mr-3.5 ml-2">Workspace 2</button>
              <CloseButton label="Close Workspace 2" />
            </div>
          </div>
          <NavButtons />
        </div>
        <div className="h-1 shrink-0 border-b-2 border-[#333] bg-[#e2e2e2]" />

        <main className="flex flex-1 gap-1.5 border-b-2 border-[#333] p-1.5">
          <div className="flex w-[662px] shrink-0 flex-col gap-1.5">
            <AppearancePanel />
            <LayoutPanel />
          </div>
          <GraphPanel />
          <div className="flex w-[584px] shrink-0 flex-col gap-1.5">
            <ContextPanel />
            <StatisticsPanel />
          </div>
        </main>
        <footer className="h-12 shrink-0 bg-[#d4d4d4]" />
      </div>
    </div>
  );
}
